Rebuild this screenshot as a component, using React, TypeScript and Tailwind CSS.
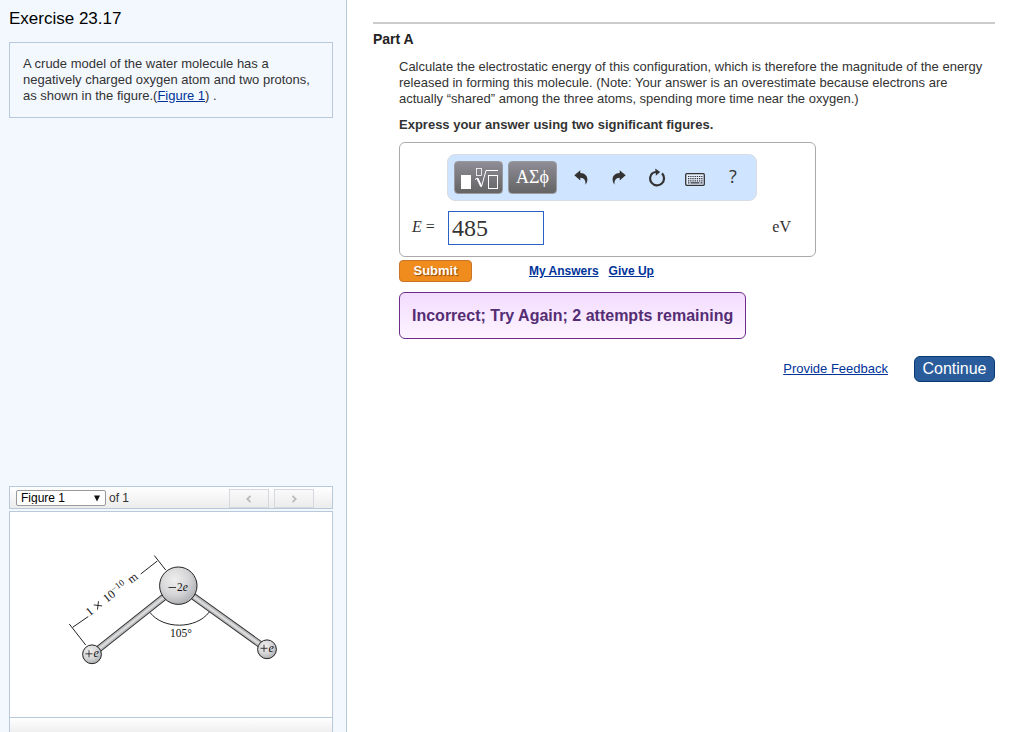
import React, { useState } from 'react';

const toolButton =
  'flex h-[33px] w-[49px] shrink-0 items-center justify-center rounded border border-[#9a9a9e] bg-linear-to-b from-[#8f8d96] to-[#646464] text-white';
const iconButton = 'flex h-[33px] w-[38px] items-center justify-center text-[#333]';
const pagerButton =
  'flex h-[19px] w-10 items-center justify-center border border-[#d5d8dc] bg-linear-to-b from-[#fafafa] to-[#ececec] text-[#bbb]';

function MoleculeFigure() {
  return (
    <svg viewBox="0 0 322 205" className="w-full" role="img" aria-label="Water molecule model">
      <defs>
        <radialGradient id="atom" cx="0.4" cy="0.35" r="0.7">
          <stop offset="0" stopColor="#efefef" />
          <stop offset="0.55" stopColor="#d6d6d8" />
          <stop offset="1" stopColor="#a9aaad" />
        </radialGradient>
      </defs>

      {/* Bonds */}
      <g strokeLinecap="butt">
        <path d="M82 142.3L168.3 73.7M257 137.3L168.3 73.7" stroke="#333" strokeWidth="7" />
        <path d="M82 142.3L168.3 73.7M257 137.3L168.3 73.7" stroke="#bcbdbf" strokeWidth="5.2" />
        <path d="M82 142.3L168.3 73.7M257 137.3L168.3 73.7" stroke="#dededf" strokeWidth="2" />
      </g>

      {/* Atoms */}
      <g fill="url(#atom)" stroke="#222" strokeWidth="1">
        <circle cx="168.3" cy="73.7" r="18.7" />
        <circle cx="82" cy="142.3" r="9.4" />
        <circle cx="257" cy="137.3" r="9.4" />
      </g>

      {/* Angle arc and distance marker */}
      <g fill="none" stroke="#222" strokeWidth="1">
        <path d="M140 100.5C153 117.5 186 117.5 199.3 100" />
        <path d="M62.7 115.3L78.3 104.5M130.7 62L147.3 49" />
        <path d="M59.3 112L75.7 133M144.3 43.5L155.7 58" />
      </g>

      {/* Charge signs */}
      <path
        d="M158.5 75.5H166M75.5 141.8H82.5M79 138.3V145.3M250.5 136.3H257.5M254 132.8V139.8"
        stroke="#111"
        strokeWidth="0.8"
      />

      <g fill="#111" fontFamily="'Liberation Serif', serif" fontSize="11.5">
        <text x="167" y="78.5">
          2<tspan fontStyle="italic">e</tspan>
        </text>
        <text x="83.5" y="145" fontStyle="italic" fontSize="12">e</text>
        <text x="258.5" y="140" fontStyle="italic" fontSize="12">e</text>
        <text x="171" y="125" textAnchor="middle">105°</text>
        <g transform="translate(79.5 104.5) rotate(-38)" fontSize="12">
          <text x="0" y="0">1</text>
          <path d="M10.5 -6.5L16.5 -0.5M16.5 -6.5L10.5 -0.5" stroke="#111" strokeWidth="0.8" />
          <text x="22" y="0">10</text>
          <text x="34" y="-4" fontSize="9">−10</text>
          <text x="53" y="0">m</text>
        </g>
      </g>
    </svg>
  );
}

function FigurePanel() {
  return (
    <section className="mt-auto">
      <div className="flex h-[23px] items-center border border-[#b8c9dc] bg-linear-to-b from-white to-[#ececec] px-1.5 text-xs text-[#333]">
        <div className="relative">
          <select
            aria-label="Figure"
            className="block h-4 w-[90px] appearance-none rounded-xs border border-[#999] bg-white pl-1 text-xs leading-none text-black"
          >
            <option>Figure 1</option>
          </select>
          <svg viewBox="0 0 8 7" className="pointer-events-none absolute top-[5px] right-[5px] h-[7px] w-2">
            <path d="M1 0.5H7L4 6.5Z" fill="#111" />
          </svg>
        </div>
        <span className="ml-[3px]">of 1</span>
        <div className="mr-3 ml-auto flex gap-[5px] self-end">
          <button className={pagerButton} aria-label="Previous figure">
            <svg viewBox="0 0 8 8" className="size-2">
              <path d="M5.5 0.8L2.3 4L5.5 7.2" fill="none" stroke="currentColor" strokeWidth="1.8" />
            </svg>
          </button>
          <button className={pagerButton} aria-label="Next figure">
            <svg viewBox="0 0 8 8" className="size-2">
              <path d="M2.5 0.8L5.7 4L2.5 7.2" fill="none" stroke="currentColor" strokeWidth="1.8" />
            </svg>
          </button>
        </div>
      </div>
      <div className="mt-0.5 border border-b-0 border-[#b8c9dc] bg-white">
        <MoleculeFigure />
        <div className="h-[15px] border-t border-[#b8c9dc] bg-linear-to-b from-white to-[#efefef]" />
      </div>
    </section>
  );
}

function EquationToolbar() {
  return (
    <div className="flex w-[310px] rounded-lg border border-[#d8dde3] bg-[#cfe5ff] py-1.5 pr-1 pl-1.5">
      <button className={toolButton} aria-label="Templates">
        <svg viewBox="0 0 38 24" className="h-6 w-[38px] shrink-0">
          <rect x="1" y="9" width="10" height="14" fill="#fff" />
          <g fill="none" stroke="#fff">
            <rect x="16.5" y="2.5" width="5" height="7" strokeWidth="0.8" />
            <path d="M15 13.5L17.5 12L21.5 20.5L26 4.5H38" />
            <path d="M17.5 12.5L21.2 20.5" strokeWidth="1.8" />
            <rect x="28.5" y="9.5" width="9" height="13" />
          </g>
        </svg>
      </button>
      <button className={`${toolButton} ml-[5px] pb-0.5 font-[Liberation_Serif,serif] text-lg leading-none`}>ΑΣϕ</button>
      <div className="ml-[5px] flex">
        <button className={iconButton} aria-label="Undo">
          <svg viewBox="0 0 14 15" className="h-[15px] w-3.5">
            <path d="M0.3 5.2L6.3 0.3V3C11 3.2 13.5 6 13.4 9.5C13.3 11.7 12.6 13.3 11.5 14.7C11.8 10.5 10.5 8 6.3 7.8V10.5Z" fill="currentColor" />
          </svg>
        </button>
        <button className={iconButton} aria-label="Redo">
          <svg viewBox="0 0 14 15" className="h-[15px] w-3.5">
            <path d="M13.7 5.2L7.7 0.3V3C3 3.2 0.5 6 0.6 9.5C0.7 11.7 1.4 13.3 2.5 14.7C2.2 10.5 3.5 8 7.7 7.8V10.5Z" fill="currentColor" />
          </svg>
        </button>
        <button className={iconButton} aria-label="Reset">
          <svg viewBox="0 0 18 19" className="h-[19px] w-[18px]">
            <path d="M4.8 4.8A7 7 0 1 0 14 5.4" fill="none" stroke="currentColor" strokeWidth="2.2" />
            <path d="M7.2 0.5L12.2 4L7.8 7.8V5L4 6L4.5 4L7.5 3Z" fill="currentColor" />
          </svg>
        </button>
        <button className={iconButton} aria-label="Keyboard">
          <svg viewBox="0 0 20 13" className="mt-1 h-[13px] w-5">
            <rect x="0.7" y="0.7" width="18.6" height="11.6" rx="1" fill="#e3efff" stroke="currentColor" strokeWidth="1.3" />
            <path d="M3 3.5H17.5M3 5.7H17.5M3 7.8H17.5" stroke="currentColor" strokeWidth="1.2" strokeDasharray="1.3 0.9" />
            <path d="M3 9.9H4.5M5.5 9.9H14.5M15.5 9.9H17.5" stroke="currentColor" strokeWidth="1.1" />
          </svg>
        </button>
        <button className={`${iconButton} pb-1 font-[Open_Sans,sans-serif] text-lg font-medium`} aria-label="Help">
          ?
        </button>
      </div>
    </div>
  );
}

export default function App() {
  const [answer, setAnswer] = useState('485');

  return (
    <div className="flex min-h-screen bg-white font-[Liberation_Sans,Arial,sans-serif] text-[13px] leading-4 text-[#333]">
      {/* Problem statement and figure */}
      <aside className="flex w-[347px] shrink-0 flex-col border-r border-[#b8c9dc] bg-[#f3f8ff] pr-[13px] pl-[9px]">
        <h1 className="mt-[9px] text-[17px] leading-5 text-black">Exercise 23.17</h1>
        <div className="mt-[13px] border border-[#b8c9dc] px-[13px] py-[13px]">
          <p>
            A crude model of the water molecule has a<br />
            negatively charged oxygen atom and two protons,<br />
            as shown in the figure.(
            <a href="#figure" className="text-[#003399] underline">Figure 1</a>) .
          </p>
        </div>
        <FigurePanel />
      </aside>

      {/* Part A */}
      <main className="min-w-0 flex-1 pt-[22px] pr-6 pl-[26px]">
        <hr className="border-t-2 border-[#ccc]" />
        <h2 className="mt-[7px] text-sm leading-4 font-bold text-[#222]">Part A</h2>
        <div className="mt-3 pl-[26px]">
          <p>
            Calculate the electrostatic energy of this configuration, which is therefore the magnitude of the energy<br />
            released in forming this molecule. (Note: Your answer is an overestimate because electrons are<br />
            actually “shared” among the three atoms, spending more time near the oxygen.)
          </p>
          <p className="mt-2.5 font-bold">Express your answer using two significant figures.</p>

          <div className="mt-[9px] w-[417px] rounded-md border border-[#aaa] px-3 py-[11px]">
            <div className="pl-[35px]">
              <EquationToolbar />
            </div>
            <div className="mt-2.5 flex items-center font-[Liberation_Serif,serif] text-base">
              <label htmlFor="answer" className="w-9 pb-0.5">
                <i>E</i> =
              </label>
              <input
                id="answer"
                value={answer}
                onChange={(e) => setAnswer(e.target.value)}
                className="h-[34px] w-24 border border-[#2a62c4] bg-white px-[3px] text-2xl"
              />
              <span className="mr-3 ml-auto pb-0.5">eV</span>
            </div>
          </div>

          <div className="mt-[3px] flex items-center text-xs font-bold text-[#003399]">
            <button className="h-[22px] w-[73px] rounded-sm border border-[#c9752a] bg-[#f08c1e] text-[13px] font-bold text-white text-shadow-[1px_1px_1px_#8a4a00]">
              Submit
            </button>
            <a href="#answers" className="ml-[57px] underline">My Answers</a>
            <a href="#give-up" className="ml-2.5 underline">Give Up</a>
          </div>

          <div className="mt-2.5 inline-block rounded-md border border-[#6d2c87] bg-linear-to-b from-[#f3dcff] to-[#fdf4ff] px-3 py-3.5 text-base leading-[17px] font-bold text-[#552d73]">
            Incorrect; Try Again; 2 attempts remaining
          </div>
        </div>

        <div className="mt-[17px] flex items-center justify-end gap-[26px]">
          <a href="#feedback" className="text-[#003399] underline">Provide Feedback</a>
          <button className="h-[26px] w-[81px] rounded-md border border-[#083a70] bg-[#2a5c9c] text-base leading-4 text-white">
            Continue
          </button>
        </div>
      </main>
    </div>
  );
}
